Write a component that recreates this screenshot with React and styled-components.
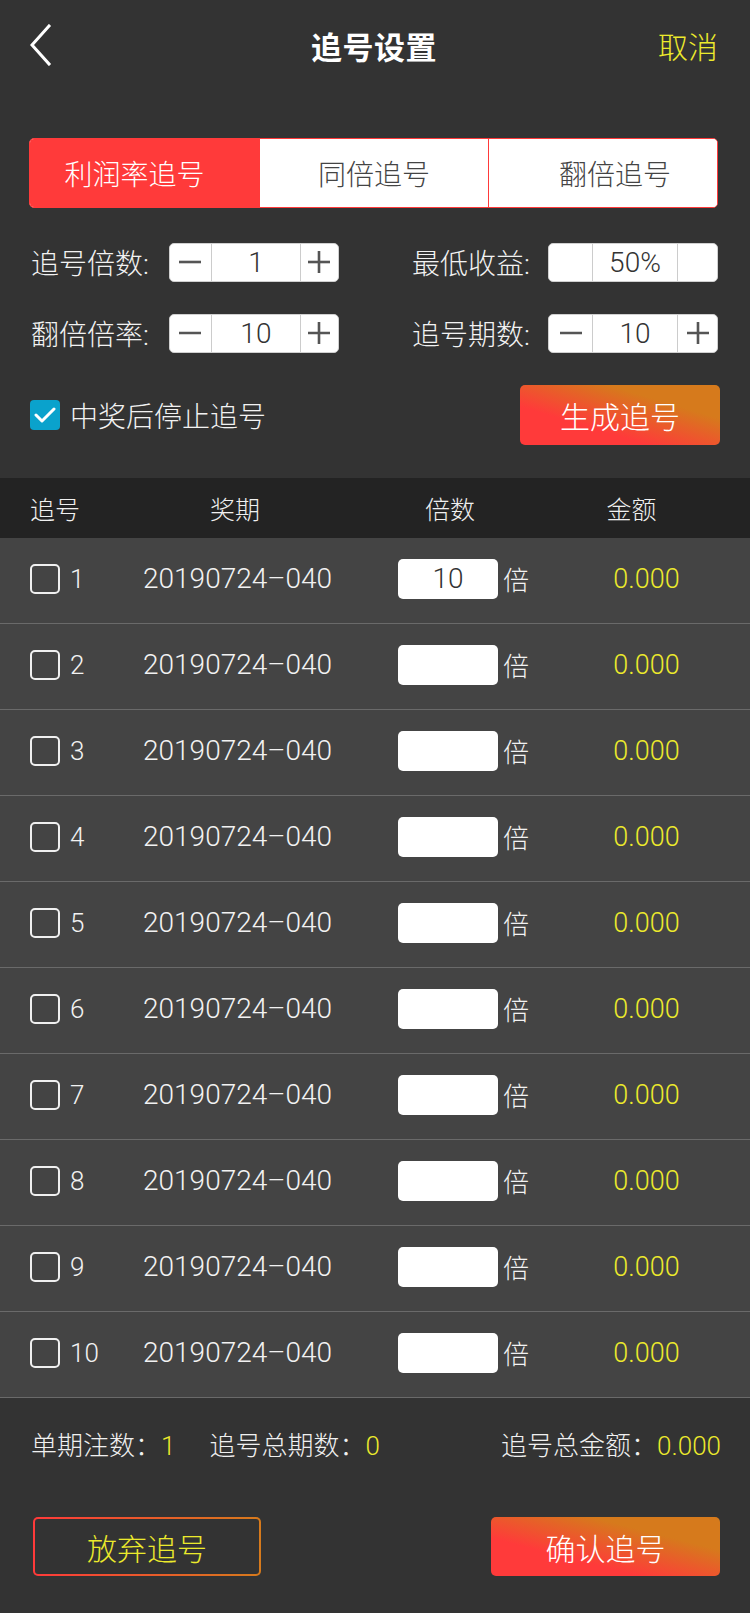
import React from "react";
import styled, { createGlobalStyle } from "styled-components";

const RED = "#ff3a3a";
const ORANGE = "#d67a1c";
const YELLOW = "#ecea2c";

const GlobalStyle = createGlobalStyle`
  html, body { margin: 0; padding: 0; background: #333333; }
  body {
    font-family: "Roboto", "Noto Sans CJK SC", sans-serif;
    font-weight: 300;
    color: #ffffff;
    -webkit-font-smoothing: antialiased;
  }
  * { box-sizing: border-box; }
`;

const Page = styled.div`
  width: 750px;
  min-height: 1613px;
  background: #333333;
  display: flex;
  flex-direction: column;
`;

const Header = styled.header`
  height: 90px;
  display: grid;
  grid-template-columns: 1fr auto 1fr;
  align-items: center;
  padding: 0 32px 0 30px;
`;

const BackButton = styled.button`
  justify-self: start;
  width: 22px;
  height: 42px;
  padding: 0;
  border: none;
  background: none;
  display: flex;
  align-items: center;
`;

const Title = styled.h1`
  margin: 0;
  font-size: 31px;
  font-weight: 700;
  color: #ffffff;
  letter-spacing: 0.5px;
`;

const Cancel = styled.span`
  justify-self: end;
  font-size: 30px;
  color: ${YELLOW};
  font-weight: 300;
`;

const Settings = styled.section`
  padding: 48px 32px 33px 29px;
  display: flex;
  flex-direction: column;
`;

const Tabs = styled.div`
  display: grid;
  grid-template-columns: 1fr 1fr 1fr;
  height: 70px;
  border: 1px solid ${RED};
  border-radius: 5px;
  overflow: hidden;
  background: #ffffff;
`;

const Tab = styled.div`
  display: flex;
  align-items: center;
  justify-content: center;
  font-size: 28px;
  color: ${(p) => (p.$active ? "#ffffff" : "#444444")};
  background: ${(p) => (p.$active ? RED : "#ffffff")};
  border-left: ${(p) => (p.$first ? "none" : `1px solid ${RED}`)};
  padding-left: ${(p) => p.$pl || 0}px;
  padding-right: ${(p) => p.$pr || 0}px;
`;

const Controls = styled.div`
  margin-top: 34px;
  display: grid;
  grid-template-columns: 1fr 1fr;
  row-gap: 31px;
`;

const Field = styled.div`
  display: flex;
  align-items: center;
  gap: ${(p) => (p.$right ? 18 : 20)}px;
  justify-self: ${(p) => (p.$right ? "end" : "start")};
  padding-left: ${(p) => (p.$right ? 0 : 2)}px;
`;

const FieldLabel = styled.span`
  font-size: 28px;
  color: #f2f2f2;
  white-space: nowrap;
`;

const Stepper = styled.div`
  display: grid;
  grid-template-columns: ${(p) => p.$minus}px 1fr ${(p) => p.$plus}px;
  width: 170px;
  height: 39px;
  background: #ffffff;
  border: 1px solid #d0d0d0;
  border-radius: 5px;
  overflow: hidden;
`;

const StepButton = styled.div`
  display: flex;
  align-items: center;
  justify-content: center;
  border-right: ${(p) => (p.$side === "minus" ? "1px solid #cccccc" : "none")};
  border-left: ${(p) => (p.$side === "plus" ? "1px solid #cccccc" : "none")};
`;

const StepValue = styled.div`
  display: flex;
  align-items: center;
  justify-content: center;
  font-size: 28px;
  color: #333333;
`;

const ActionRow = styled.div`
  margin-top: 32px;
  display: flex;
  align-items: center;
  justify-content: space-between;
`;

const CheckLabel = styled.label`
  display: flex;
  align-items: center;
  gap: 10px;
  font-size: 28px;
  color: #f2f2f2;
  padding-left: 1px;
`;

const CheckedBox = styled.span`
  width: 30px;
  height: 30px;
  border-radius: 4px;
  background: #0aa2cc;
  display: flex;
  align-items: center;
  justify-content: center;
`;

const GradientButton = styled.button`
  width: ${(p) => p.$w}px;
  height: ${(p) => p.$h}px;
  margin-right: ${(p) => p.$mr || 0}px;
  border: none;
  border-radius: 5px;
  background: linear-gradient(to top right, ${RED} 32%, ${ORANGE} 72%);
  color: #ffffff;
  font-family: "Noto Sans CJK SC", sans-serif;
  font-weight: 300;
  font-size: 30px;
  padding: 0;
`;

const OutlineButton = styled.button`
  width: ${(p) => p.$w}px;
  height: ${(p) => p.$h}px;
  border: 2px solid transparent;
  border-radius: 5px;
  background: linear-gradient(#333333, #333333) padding-box,
    linear-gradient(to right, ${RED}, ${ORANGE}) border-box;
  color: ${YELLOW};
  font-family: "Noto Sans CJK SC", sans-serif;
  font-weight: 300;
  font-size: 30px;
  padding: 0;
`;

const COLS = "113px 184px 236px 1fr";

const TableHead = styled.div`
  height: 60px;
  background: #232323;
  display: grid;
  grid-template-columns: ${COLS};
  align-items: center;
  padding-left: 30px;
`;

const HeadCell = styled.div`
  font-size: 25px;
  color: #f0f0f0;
  text-align: ${(p) => p.$align || "center"};
  padding-left: ${(p) => p.$pl || 0}px;
  padding-right: ${(p) => p.$pr || 0}px;
`;

const Row = styled.div`
  height: 86px;
  background: #444444;
  border-bottom: 1px solid #6a6a6a;
  display: grid;
  grid-template-columns: ${COLS};
  align-items: center;
  padding-left: 30px;
`;

const IndexCell = styled.div`
  display: flex;
  align-items: center;
  gap: 10px;
  font-size: 26px;
  color: #f2f2f2;
  padding-bottom: 4px;
`;

const EmptyBox = styled.span`
  width: 30px;
  height: 30px;
  border: 2px solid #f0f0f0;
  border-radius: 5px;
  flex: none;
`;

const DateCell = styled.div`
  text-align: center;
  font-size: 28px;
  color: #f2f2f2;
  white-space: nowrap;
  padding-bottom: 4px;
  padding-right: 4px;
`;

const MultCell = styled.div`
  display: flex;
  align-items: center;
  gap: 5px;
  padding-left: 71px;
  padding-bottom: 4px;
`;

const MultInput = styled.div`
  width: 100px;
  height: 40px;
  background: #ffffff;
  border-radius: 5px;
  display: flex;
  align-items: center;
  justify-content: center;
  font-size: 28px;
  color: #333333;
`;

const Unit = styled.span`
  font-size: 26px;
  color: #f2f2f2;
`;

const AmountCell = styled.div`
  text-align: center;
  font-size: 27px;
  color: ${YELLOW};
  padding-right: 20px;
  padding-bottom: 4px;
`;

const Footer = styled.footer`
  display: flex;
  flex-direction: column;
  padding: 0 29px 37px 31px;
`;

const Summary = styled.div`
  height: 91px;
  display: flex;
  align-items: center;
  justify-content: space-between;
  font-size: 26px;
`;

const SummaryGroup = styled.div`
  display: flex;
  align-items: center;
  gap: 34px;
`;

const SummaryItem = styled.span`
  color: #f0f0f0;
  white-space: nowrap;
`;

const SummaryValue = styled.span`
  color: ${YELLOW};
`;

const ButtonRow = styled.div`
  margin-top: 28px;
  display: flex;
  justify-content: space-between;
  padding-left: 2px;
  padding-right: 1px;
`;

const Minus = () => (
  <svg width="24" height="24" viewBox="0 0 24 24">
    <line x1="1" y1="12" x2="23" y2="12" stroke="#555" strokeWidth="2.6" />
  </svg>
);

const Plus = () => (
  <svg width="24" height="24" viewBox="0 0 24 24">
    <line x1="1" y1="12" x2="23" y2="12" stroke="#555" strokeWidth="2.6" />
    <line x1="12" y1="1" x2="12" y2="23" stroke="#555" strokeWidth="2.6" />
  </svg>
);

const StepperControl = ({ value, minus = 42, plus = 38, icons = true }) => (
  <Stepper $minus={minus} $plus={plus}>
    <StepButton $side="minus">{icons && <Minus />}</StepButton>
    <StepValue>{value}</StepValue>
    <StepButton $side="plus">{icons && <Plus />}</StepButton>
  </Stepper>
);

const rows = Array.from({ length: 10 }, (_, i) => i + 1);

export default function App() {
  return (
    <>
      <GlobalStyle />
      <Page>
        <Header>
          <BackButton aria-label="back">
            <svg width="22" height="42" viewBox="0 0 22 42">
              <polyline
                points="19,2 2,21 19,40"
                fill="none"
                stroke="#ffffff"
                strokeWidth="3"
                strokeLinecap="square"
              />
            </svg>
          </BackButton>
          <Title>追号设置</Title>
          <Cancel>取消</Cancel>
        </Header>

        <Settings>
          <Tabs>
            <Tab $active $first $pr={20}>利润率追号</Tab>
            <Tab>同倍追号</Tab>
            <Tab $pl={24}>翻倍追号</Tab>
          </Tabs>

          <Controls>
            <Field>
              <FieldLabel>追号倍数:</FieldLabel>
              <StepperControl value="1" />
            </Field>
            <Field $right>
              <FieldLabel>最低收益:</FieldLabel>
              <StepperControl value="50%" minus={44} plus={40} icons={false} />
            </Field>
            <Field>
              <FieldLabel>翻倍倍率:</FieldLabel>
              <StepperControl value="10" />
            </Field>
            <Field $right>
              <FieldLabel>追号期数:</FieldLabel>
              <StepperControl value="10" minus={44} plus={40} />
            </Field>
          </Controls>

          <ActionRow>
            <CheckLabel>
              <CheckedBox>
                <svg width="22" height="18" viewBox="0 0 22 18">
                  <polyline
                    points="2,9 8,15 20,3"
                    fill="none"
                    stroke="#ffffff"
                    strokeWidth="3"
                    strokeLinecap="round"
                    strokeLinejoin="round"
                  />
                </svg>
              </CheckedBox>
              中奖后停止追号
            </CheckLabel>
            <GradientButton $w={200} $h={60} $mr={-2}>生成追号</GradientButton>
          </ActionRow>
        </Settings>

        <TableHead>
          <HeadCell $align="left">追号</HeadCell>
          <HeadCell>奖期</HeadCell>
          <HeadCell $pl={10}>倍数</HeadCell>
          <HeadCell $pr={50}>金额</HeadCell>
        </TableHead>

        {rows.map((n) => (
          <Row key={n}>
            <IndexCell>
              <EmptyBox />
              {n}
            </IndexCell>
            <DateCell>20190724–040</DateCell>
            <MultCell>
              <MultInput>{n === 1 ? "10" : ""}</MultInput>
              <Unit>倍</Unit>
            </MultCell>
            <AmountCell>0.000</AmountCell>
          </Row>
        ))}

        <Footer>
          <Summary>
            <SummaryGroup>
              <SummaryItem>
                单期注数：<SummaryValue>1</SummaryValue>
              </SummaryItem>
              <SummaryItem>
                追号总期数：<SummaryValue>0</SummaryValue>
              </SummaryItem>
            </SummaryGroup>
            <SummaryItem>
              追号总金额：<SummaryValue>0.000</SummaryValue>
            </SummaryItem>
          </Summary>
          <ButtonRow>
            <OutlineButton $w={228} $h={59}>放弃追号</OutlineButton>
            <GradientButton $w={229} $h={59}>确认追号</GradientButton>
          </ButtonRow>
        </Footer>
      </Page>
    </>
  );
}
